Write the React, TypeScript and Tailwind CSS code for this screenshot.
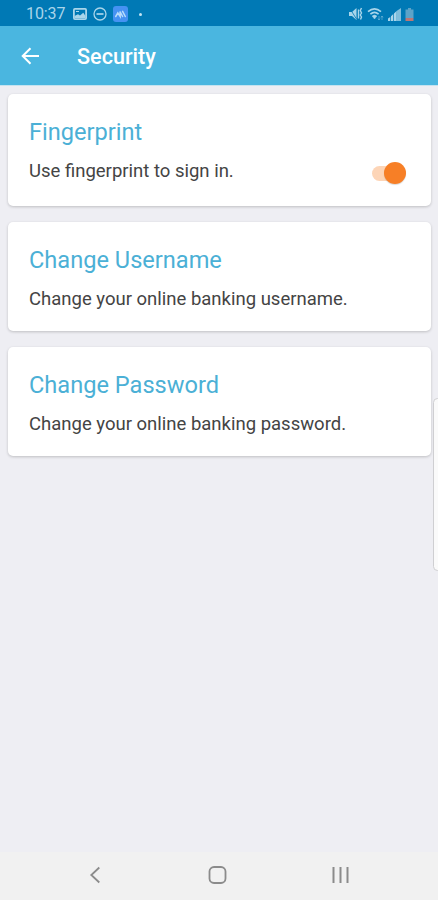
import type { ReactNode } from 'react';

const options = [
  { title: 'Fingerprint', text: 'Use fingerprint to sign in.', toggle: true },
  { title: 'Change Username', text: 'Change your online banking username.' },
  { title: 'Change Password', text: 'Change your online banking password.' },
];

function StatusBar() {
  return (
    <div className="flex h-[26px] items-center justify-between bg-[#0079b5] pt-0.5 pr-6 pl-[26px] text-[#a9d5ea]">
      <div className="flex items-center">
        <span className="w-[47px] text-[16px] leading-6 tracking-[-0.1px]">10:37</span>
        <svg width="14" height="12" viewBox="0 0 14 12" fill="none">
          <rect x="0.9" y="0.9" width="12.2" height="10.2" rx="1" stroke="currentColor" strokeWidth="1.8" />
          <path d="M1.5 10V8L5 6.2l2 1.3L10.3 4.8 12.5 8v2z" fill="currentColor" />
          <path d="M3 3.5h3" stroke="currentColor" />
        </svg>
        <svg className="ml-1.5" width="14" height="14" viewBox="0 0 14 14" fill="none" stroke="currentColor" strokeWidth="1.3">
          <circle cx="7" cy="7" r="6" />
          <path d="M3.5 7h7" strokeWidth="1.7" />
        </svg>
        <svg className="ml-1.5" width="15" height="16" viewBox="0 0 15 16" fill="none">
          <rect width="15" height="16" rx="3" fill="#4592f2" />
          <path d="M2.7 10.5 4.8 7l2.4 3.5L7 5.5l2.6 5M9.6 5.3l2.7 5.2" stroke="#b9dcfa" strokeWidth="1.5" strokeLinecap="round" />
        </svg>
        <span className="ml-[11px] size-[3px] rounded-full bg-[#c3e4f3]" />
      </div>
      <div className="flex items-center gap-1">
        <svg width="15" height="14" viewBox="0 0 15 14" fill="none">
          <path d="M1 5h3L8.5 1v12L4 9H1z" fill="currentColor" />
          <path d="m1.5 1 7 11" stroke="#0079b5" strokeWidth="0.8" />
          <path d="M10.5 2.5v9M13.5 1l-1.2 2.5L13.5 6l-1.2 2 1.2 2-1 2.5" stroke="currentColor" strokeWidth="1.4" />
        </svg>
        <svg width="17" height="14" viewBox="0 0 17 14" fill="none" stroke="currentColor">
          <path d="M1 4.7Q7.5-1 14 4.7M3.4 7.2Q7.5 3.6 11.6 7.2" strokeWidth="1.6" />
          <path d="m5.2 9 2.3 3 2.3-3Q7.5 7.2 5.2 9z" fill="currentColor" strokeWidth="0.5" />
          <path d="M12 9v4M11 11.5l1 1.5 1-1.5M15 13V9m-1 1.5L15 9l1 1.5" strokeWidth="0.7" opacity="0.6" />
        </svg>
        <svg width="13" height="13" viewBox="0 0 13 13" fill="currentColor">
          <path d="M0 13V10.5L2.3 9v4zM3 13V8.3L5.3 6v7zM6 13V5.5L8.6 3v10z" />
          <path d="M8.6 13V3L13 0v13z" opacity="0.75" />
        </svg>
        <svg width="9" height="13" viewBox="0 0 9 13">
          <path d="M3 0h3v1.5h2.5V10H.5V1.5H3z" fill="#5da3c8" />
          <path d="M.5 10h8v3h-8z" fill="#bd7674" />
        </svg>
      </div>
    </div>
  );
}

function Header() {
  return (
    <header className="flex h-[59px] items-center bg-[#4ab6e0] pl-[21px] text-white">
      <svg width="19" height="18" viewBox="0 0 19 18" fill="none" stroke="currentColor" strokeWidth="2">
        <path d="M18 9H2M9.5 1.2 1.7 9l7.8 7.8" />
      </svg>
      <h1 className="ml-[37px] pt-0.5 text-[21.6px] leading-7 font-medium">Security</h1>
    </header>
  );
}

function Card({ title, children, tall }: { title: string; children: ReactNode; tall?: boolean }) {
  return (
    <section
      className={`${tall ? 'h-[112px]' : 'h-[109px]'} rounded-[5px] bg-white pt-[23px] pr-[25px] pl-[21px] shadow-[0_1px_3px_rgba(0,0,0,0.2)]`}
    >
      <h2 className="text-[23.6px] leading-[30px] text-[#4bb0d6]">{title}</h2>
      {children}
    </section>
  );
}

function Switch() {
  return (
    <span className="flex h-[22px] w-[34px] items-center">
      <span className="h-[15px] w-[26px] shrink-0 rounded-full bg-[#fdd5b7]" />
      <span className="-ml-[14px] size-[22px] shrink-0 rounded-full bg-[#f77f26] shadow-[0_1px_1px_rgba(0,0,0,0.15)]" />
    </span>
  );
}

function NavBar() {
  return (
    <nav className="flex h-12 items-center bg-[#f1f1f1] pb-0.5 pl-[89px] text-[#8b8b8b]">
      <svg width="12" height="18" viewBox="0 0 12 18" fill="none" stroke="currentColor" strokeWidth="1.8">
        <path d="M10.3 1.5 2.3 9l8 7.5" />
      </svg>
      <svg className="ml-[107px]" width="19" height="18" viewBox="0 0 19 18" fill="none" stroke="currentColor" strokeWidth="1.8">
        <rect x="1.5" y="1" width="16" height="16" rx="4.5" />
      </svg>
      <svg className="ml-[105px]" width="17" height="16" viewBox="0 0 17 16" fill="none" stroke="currentColor" strokeWidth="2">
        <path d="M1.5 0v16M8.5 0v16M15.5 0v16" />
      </svg>
    </nav>
  );
}

export default function App() {
  return (
    <div className="relative flex h-[900px] w-[438px] flex-col overflow-hidden bg-[#eeeef3] font-['Roboto',sans-serif]">
      <StatusBar />
      <Header />
      <main className="flex flex-1 flex-col border-t border-[#c5e3f0] pt-2 pr-[7px] pl-2">
        <div className="flex flex-col gap-4">
          {options.map((o) => (
            <Card key={o.title} title={o.title} tall={o.toggle}>
              <div className="flex items-start justify-between">
                <p className="mt-3 text-[18.5px] leading-6 text-[#444]">{o.text}</p>
                {o.toggle && (
                  <div className="mt-[15px]">
                    <Switch />
                  </div>
                )}
              </div>
            </Card>
          ))}
        </div>
      </main>
      <NavBar />
      {/* edge panel handle */}
      <div className="absolute top-[398px] -right-1 h-[173px] w-[9px] rounded-[5px] border border-[#cfcfd2] bg-[#fafafa]" />
    </div>
  );
}
